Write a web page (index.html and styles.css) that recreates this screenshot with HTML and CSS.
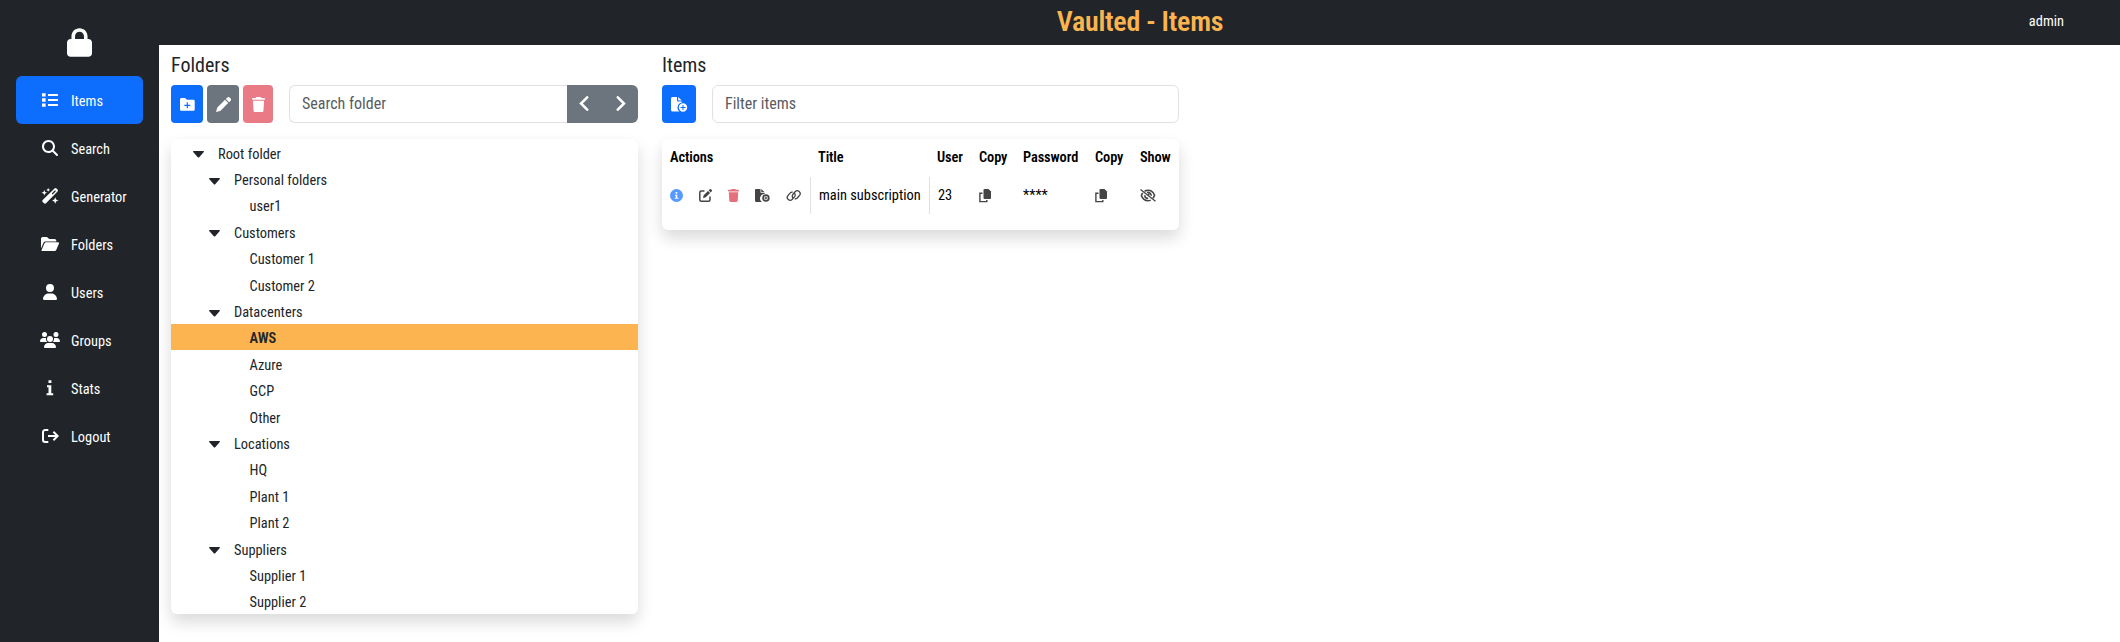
FILE: index.html
```
<!DOCTYPE html>
<html lang="en">
<head>
<meta charset="utf-8">
<title>Vaulted - Items</title>
<link rel="stylesheet" href="styles.css">
</head>
<body>
<svg class="sprite" aria-hidden="true">
  <symbol id="trash" viewBox="0 0 448 512" preserveAspectRatio="none"><path d="M135 18L128 32H32a32 32 0 0 0 0 64H416a32 32 0 0 0 0-64H320l-7-14C307 7 296 0 284 0H164c-12 0-23 7-29 18zM416 128H32L53 467c2 25 23 45 48 45H347c25 0 46-20 48-45z"/></symbol>
  <symbol id="caret" viewBox="0 0 11 7"><path d="M.7 0H10.300c.6 0 .9.700.5 1.100L6.200 6.300c-.4.400-1 .400-1.400 0L.2 1.100C-.2.700.1 0 .7 0z"/></symbol>
  <symbol id="copy" viewBox="0 0 13 14"><path d="M5.500 0H9.500L12 2.500V9a1 1 0 0 1-1 1H5.500a1 1 0 0 1-1-1V1a1 1 0 0 1 1-1z"/><path d="M3.500 4.200H.9V12.600H7.800V11" fill="none" stroke="currentColor" stroke-width="1.400"/></symbol>
</svg>
<div class="app">
  <aside class="sidebar">
    <svg class="logo" viewBox="0 0 448 512"><path d="M144 144v48H304V144c0-44.200-35.800-80-80-80s-80 35.800-80 80zM80 192V144C80 64.500 144.500 0 224 0s144 64.500 144 144v48h16c35.300 0 64 28.700 64 64V448c0 35.300-28.700 64-64 64H64c-35.300 0-64-28.700-64-64V256c0-35.300 28.700-64 64-64H80z"/></svg>
    <nav class="nav">
      <a class="nav-link active"><span class="nav-icon"><svg width="16" height="14" viewBox="0 0 16 14"><path d="M0 .2h3.600v3.400H0zM0 5.300h3.600v3.400H0zM0 10.400h3.600v3.400H0zM6 .9h9.200a1 1 0 0 1 0 2.100H6zM6 5.950h9.200a1 1 0 0 1 0 2.100H6zM6 11h9.200a1 1 0 0 1 0 2.100H6z"/></svg></span><span class="tx">Items</span></a>
      <a class="nav-link"><span class="nav-icon"><svg width="16" height="16" viewBox="0 0 512 512"><path d="M416 208c0 45.900-14.900 88.300-40 122.700L502.600 457.400c12.500 12.500 12.500 32.800 0 45.300s-32.800 12.500-45.300 0L330.700 376c-34.400 25.200-76.800 40-122.700 40C93.100 416 0 322.900 0 208S93.100 0 208 0S416 93.100 416 208zM208 352a144 144 0 1 0 0-288 144 144 0 1 0 0 288z"/></svg></span><span class="tx">Search</span></a>
      <a class="nav-link"><span class="nav-icon"><svg width="18" height="16" viewBox="0 0 18 16"><path d="M13.500.5a1.500 1.500 0 0 1 2 0l1 1a1.500 1.500 0 0 1 0 2L5 15.300a1.500 1.500 0 0 1-2 0l-1.300-1.300a1.500 1.500 0 0 1 0-2zM14 2.200L10.700 5.600l.9.900L15 3.100z" fill-rule="evenodd"/><path d="M3.300 2l.8 2 2 .8-2 .8-.8 2-.8-2-2-.8 2-.8zM7.200 0l.6 1.300 1.300.6-1.300.6-.6 1.300-.6-1.300-1.300-.6 1.300-.6zM14.200 9.300l.9 2.300 2.300.9-2.300.9-.9 2.300-.9-2.300-2.300-.9 2.300-.9z"/></svg></span><span class="tx">Generator</span></a>
      <a class="nav-link"><span class="nav-icon"><svg width="18" height="14" viewBox="0 0 18 14"><path d="M0 11.500V1.800C0 .8.800 0 1.800 0h3.500c.5 0 1 .2 1.300.5l1 1c.2.300.5.400.9.400h5c1 0 1.800.800 1.800 1.800V4.500H4.800c-1 0-1.800.5-2.300 1.300z"/><path d="M.6 13.100L3.500 6.300c.3-.6.800-1 1.500-1H17c.8 0 1.200.7.9 1.400l-2.700 6.300c-.3.600-.8 1-1.500 1H1.200c-.5 0-.8-.4-.6-.9z"/></svg></span><span class="tx">Folders</span></a>
      <a class="nav-link"><span class="nav-icon"><svg width="14" height="16" viewBox="0 0 448 512"><path d="M224 256A128 128 0 1 0 224 0a128 128 0 1 0 0 256zm-45.700 48C79.800 304 0 383.800 0 482.300C0 498.700 13.300 512 29.700 512H418.300c16.400 0 29.700-13.300 29.700-29.700C448 383.800 368.200 304 269.700 304H178.300z"/></svg></span><span class="tx">Users</span></a>
      <a class="nav-link"><span class="nav-icon"><svg width="20" height="16" viewBox="0 0 640 512"><path d="M144 0a80 80 0 1 1 0 160A80 80 0 1 1 144 0zM512 0a80 80 0 1 1 0 160A80 80 0 1 1 512 0zM0 298.700C0 239.800 47.800 192 106.700 192h42.700c15.900 0 31 3.500 44.600 9.700-1.300 7.200-1.900 14.700-1.900 22.300 0 38.200 16.800 72.500 43.300 96H21.300C9.600 320 0 310.400 0 298.700zM405.300 320c26.600-23.500 43.300-57.800 43.300-96 0-7.600-.7-15-1.900-22.300 13.600-6.300 28.700-9.700 44.600-9.700h42.700C592.200 192 640 239.800 640 298.700c0 11.800-9.600 21.300-21.300 21.300zM224 224a96 96 0 1 1 192 0 96 96 0 1 1-192 0zM128 485.300C128 411.700 187.700 352 261.300 352H378.700C452.300 352 512 411.700 512 485.300c0 14.700-11.900 26.700-26.700 26.700H154.700c-14.700 0-26.700-11.900-26.700-26.700z"/></svg></span><span class="tx">Groups</span></a>
      <a class="nav-link"><span class="nav-icon"><svg width="8" height="16" viewBox="0 0 8 16"><path d="M2.500.2h2.900v2.900H2.500zM1 5.200h4.300v8h1.900v2H.6v-2h1.900v-6H1z"/></svg></span><span class="tx">Stats</span></a>
      <a class="nav-link"><span class="nav-icon"><svg class="outline" width="17" height="14" viewBox="0 0 17 14"><path d="M6.300 1H3.200A2.200 2.200 0 0 0 1 3.200v7.600A2.200 2.200 0 0 0 3.200 13h3.100M6 7h9.500M11.400 2.700L15.700 7l-4.300 4.300" stroke-width="2"/></svg></span><span class="tx">Logout</span></a>
    </nav>
  </aside>
  <div class="body">
    <header class="topbar"><h1 class="title tx">Vaulted - Items</h1><span class="who tx">admin</span></header>
    <main class="main">
      <section class="folders">
        <h2 class="heading"><span class="tx">Folders</span></h2>
        <div class="toolbar">
          <button class="btn blue"><svg width="15" height="13" viewBox="0 0 15 13"><path fill-rule="evenodd" d="M1.500 0H5l2 1.800h6.300c.8 0 1.400.6 1.400 1.400v8.200c0 .8-.6 1.400-1.400 1.400H1.500C.7 12.800 0 12.200 0 11.400V1.400C0 .6.700 0 1.500 0zM6.700 4.300v2.400H4.300v1.200h2.400v2.400h1.200V7.900h2.400V6.700H7.900V4.300z"/></svg></button>
          <button class="btn gray"><svg width="15" height="15" viewBox="0 0 14 14"><path d="M10.600.5a1.500 1.500 0 0 1 2.100 0l.9.900a1.500 1.500 0 0 1 0 2.100L12.200 4.900 9.200 1.900zM8.400 2.600l3 3-6.700 6.700c-.3.300-.7.500-1.100.7L0 14l1-3.600c.1-.4.400-.8.700-1.100z"/></svg></button>
          <button class="btn red"><svg width="13" height="15"><use href="#trash"/></svg></button>
          <div class="group"><div class="input"><span class="tx">Search folder</span></div><div class="arrows"><svg class="outline" width="10" height="15" viewBox="0 0 10 15"><path d="M8.200 1.300L2 7.500l6.200 6.200"/></svg><svg class="outline" width="10" height="15" viewBox="0 0 10 15"><path d="M1.800 1.300L8 7.500l-6.200 6.200"/></svg></div></div>
        </div>
        <div class="card tree">
          <div class="row l0"><svg class="caret"><use href="#caret"/></svg><span class="tx">Root folder</span></div>
          <div class="row l1"><svg class="caret"><use href="#caret"/></svg><span class="tx">Personal folders</span></div>
          <div class="row l2"><span class="tx">user1</span></div>
          <div class="row l1"><svg class="caret"><use href="#caret"/></svg><span class="tx">Customers</span></div>
          <div class="row l2"><span class="tx">Customer 1</span></div>
          <div class="row l2"><span class="tx">Customer 2</span></div>
          <div class="row l1"><svg class="caret"><use href="#caret"/></svg><span class="tx">Datacenters</span></div>
          <div class="row l2 selected"><span class="tx">AWS</span></div>
          <div class="row l2"><span class="tx">Azure</span></div>
          <div class="row l2"><span class="tx">GCP</span></div>
          <div class="row l2"><span class="tx">Other</span></div>
          <div class="row l1"><svg class="caret"><use href="#caret"/></svg><span class="tx">Locations</span></div>
          <div class="row l2"><span class="tx">HQ</span></div>
          <div class="row l2"><span class="tx">Plant 1</span></div>
          <div class="row l2"><span class="tx">Plant 2</span></div>
          <div class="row l1"><svg class="caret"><use href="#caret"/></svg><span class="tx">Suppliers</span></div>
          <div class="row l2"><span class="tx">Supplier 1</span></div>
          <div class="row l2"><span class="tx">Supplier 2</span></div>
        </div>
      </section>
      <section class="items">
        <h2 class="heading"><span class="tx">Items</span></h2>
        <div class="toolbar">
          <button class="btn blue"><svg width="17" height="15" viewBox="0 0 17 15"><path d="M1.500 0H6v3.700c0 .5.400.8.800.8H10.800v1.100A5 5 0 0 0 8.500 14.500H1.500A1.500 1.500 0 0 1 0 13V1.500A1.500 1.500 0 0 1 1.500 0zM7.200.1l3.500 3.300H7.200z"/><path fill-rule="evenodd" d="M12 6.300a4.200 4.200 0 1 1 0 8.400 4.200 4.200 0 0 1 0-8.400zM11.500 8v2h-2v1h2v2h1v-2h2v-1h-2V8z"/></svg></button>
          <div class="input filter"><span class="tx">Filter items</span></div>
        </div>
        <div class="card table">
          <div class="tr th"><span class="tx">Actions</span><span class="tx">Title</span><span class="tx">User</span><span class="tx">Copy</span><span class="tx">Password</span><span class="tx">Copy</span><span class="tx">Show</span></div>
          <div class="tr td">
            <div class="actions">
              <svg class="info" width="13" height="13" viewBox="0 0 13 13"><path fill-rule="evenodd" d="M6.500 0a6.500 6.500 0 1 1 0 13 6.500 6.500 0 0 1 0-13zM5.600 3v1.700h1.700V3zM5 5.700v1h.8v2H4.800v1h3.700v-1H7.300v-3z"/></svg>
              <svg width="13" height="13" viewBox="0 0 13 13"><path d="M5.500 2H2.300C1.400 2 .8 2.600.8 3.500v7.200c0 .9.600 1.500 1.500 1.500h7.200c.9 0 1.500-.6 1.500-1.500V7.500" fill="none" stroke="currentColor" stroke-width="1.500"/><path d="M10.500.4a1.200 1.200 0 0 1 1.700 0l.4.4a1.200 1.200 0 0 1 0 1.700l-.9.900-2.100-2.100zM9 1.900L11.100 4 7 8.100c-.2.200-.4.300-.6.300L4 9l.6-2.400c.1-.2.200-.4.300-.6z"/></svg>
              <svg class="del" width="11" height="13"><use href="#trash"/></svg>
              <svg width="15" height="13" viewBox="0 0 15 13"><path d="M1.200 0H5.500v3.200c0 .4.300.6.700.6h3.400v1.300A4.300 4.300 0 0 0 7 13H1.200C.5 13 0 12.500 0 11.800V1.200C0 .5.500 0 1.200 0zM6.300.1L9.400 3.100H6.300z"/><circle cx="10.900" cy="9.100" r="2.900" fill="none" stroke="currentColor" stroke-width="1.700"/><path d="M10.400 7.600h1v1h1v1h-1v1h-1v-1h-1v-1h1z"/></svg>
              <svg class="outline" width="16" height="13" viewBox="0 0 16 13" stroke-width="1.300"><path d="M7.200 9.200a2.900 2.900 0 0 1-.4-3.700L9.300 2.500a2.900 2.900 0 0 1 4.400 3.700L11.300 9a2.900 2.900 0 0 1-2.600.9"/><path d="M8.200 3.900a2.900 2.900 0 0 1 .4 3.700L6.100 10.500A2.900 2.900 0 0 1 1.700 6.800L4.100 4.100A2.900 2.900 0 0 1 6.700 3.200"/></svg>
            </div>
            <div class="cell line"><span class="tx">main subscription</span></div>
            <div class="cell line"><span class="tx">23</span></div>
            <div class="cell"><svg width="13" height="14"><use href="#copy"/></svg></div>
            <div class="cell"><span class="tx">****</span></div>
            <div class="cell"><svg width="13" height="14"><use href="#copy"/></svg></div>
            <div class="cell"><svg class="outline" width="16" height="13" viewBox="0 0 16 13"><path d="M.5.500l15 11.800" stroke-width="1.300"/><path d="M4.500 2.400C5.500 1.700 6.700 1.300 8 1.300c3.300 0 5.600 2.300 6.600 5.200-.4 1-1 1.900-1.800 2.700M2.700 4.100C2.100 4.900 1.700 5.700 1.400 6.500 2.400 9.400 4.700 11.700 8 11.700c1 0 1.900-.2 2.700-.6M4.800 6.200c0 2 1.400 3.200 3.400 3.200M7 3.500a3.300 3.300 0 0 1 4.200 3.300M8 5.200l1.300 1" stroke-width="1.600"/></svg></div>
          </div>
        </div>
      </section>
    </main>
  </div>
</div>
</body>
</html>
```
FILE: styles.css
```
* { box-sizing: border-box; }
body { margin: 0; font-family: "Roboto Condensed", Roboto, sans-serif; font-stretch: 75%; font-size: 14.400px; font-weight: 390; letter-spacing: 0; color: #212529; background: #fff; }
svg { fill: currentColor; flex: none; }
.outline { fill: none; stroke: currentColor; }
.sprite { display: none; }
.tx { display: inline-block; white-space: nowrap; }
.app { display: flex; height: 642px; overflow: hidden; }
.sidebar { width: 159px; background: #212529; color: #fff; padding: 28px 16px 0; display: flex; flex-direction: column; }
.logo { width: 25px; height: 29px; align-self: center; }
.nav { margin-top: 19px; font-weight: 450; }
.nav-link { display: flex; align-items: center; height: 48px; padding-left: 24px; border-radius: 6px; }
.nav-link.active { background: #0d6efd; }
.nav-icon { width: 20px; margin-right: 11px; display: flex; justify-content: center; }
.nav-link > .tx { padding-top: 2px; }
.body { flex: 1; min-width: 0; }
.topbar { height: 45px; background: #212529; color: #fff; display: grid; grid-template-columns: 1fr auto 1fr; align-items: center; padding-right: 56px; }
.title { grid-column: 2; margin: -2px 0 0 57px; font-size: 28px; line-height: 40px; font-weight: 620; color: #fbb450; letter-spacing: -.25px; }
.who { justify-self: end; font-weight: 440; margin-top: -3px; }
.main { display: flex; gap: 24px; padding: 8px 12px 0; }
.folders { width: 467px; flex: none; }
.items { width: 517px; flex: none; }
.heading { margin: 0 0 8px; height: 24px; line-height: 24px; font-size: 20px; font-weight: 380; }
.toolbar { display: flex; height: 38px; gap: 4px; }
.btn { flex: none; width: 32px; padding: 0; border: 0; border-radius: 4px; color: #fff; display: flex; align-items: center; justify-content: center; }
.blue { background: #0d6efd; }
.gray { background: #6c757d; }
.red { width: 30px; background: #ea7b86; }
.items .btn { width: 34px; }
.group { flex: 1; display: flex; margin-left: 12px; }
.input { flex: 1; display: flex; align-items: center; padding: 0 0 2px 12px; border: 1px solid #dee2e6; border-radius: 6px; font-size: 16px; color: #595c5f; }
.group .input { border-right: 0; border-radius: 6px 0 0 6px; }
.filter { margin-left: 12px; }
.arrows { width: 71px; display: flex; align-items: center; justify-content: space-between; padding: 0 12px 2px; background: #6c757d; color: #fff; border-radius: 0 6px 6px 0; }
.arrows svg { stroke-width: 2.500; stroke-linecap: round; }
.card { margin-top: 16px; background: #fff; border-radius: 6px; box-shadow: 0 8px 16px rgba(0, 0, 0, .15); overflow: hidden; }
.tree { height: 475px; }
.row { display: flex; align-items: center; height: 26.400px; line-height: 22px; padding-top: 4px; }
.row .tx { padding-top: 1px; }
.caret { width: 11px; height: 7px; margin: 1px 14px 0 0; }
.l0 { padding-left: 22px; }
.l1 { padding-left: 38px; }
.l2 { padding-left: 78.500px; }
.selected { background: #fbb450; font-weight: 620; }
.table { height: 91px; color: #000; }
.tr { display: grid; grid-template-columns: 148px 119px 42px 44px 72px 45px 47px; }
.th { height: 38px; align-items: center; font-weight: 620; letter-spacing: -.1px; padding-bottom: 1px; }
.th .tx { padding-left: 8px; }
.td { height: 37px; }
.cell { display: flex; align-items: center; padding-left: 8px; }
.cell svg, .actions { color: #444; }
.line { border-left: 1px solid #dee2e6; }
.actions { display: flex; align-items: center; gap: 16px; padding-left: 8px; }
.actions .info { color: #569aff; }
.actions .del { color: #e66f7c; }
```
